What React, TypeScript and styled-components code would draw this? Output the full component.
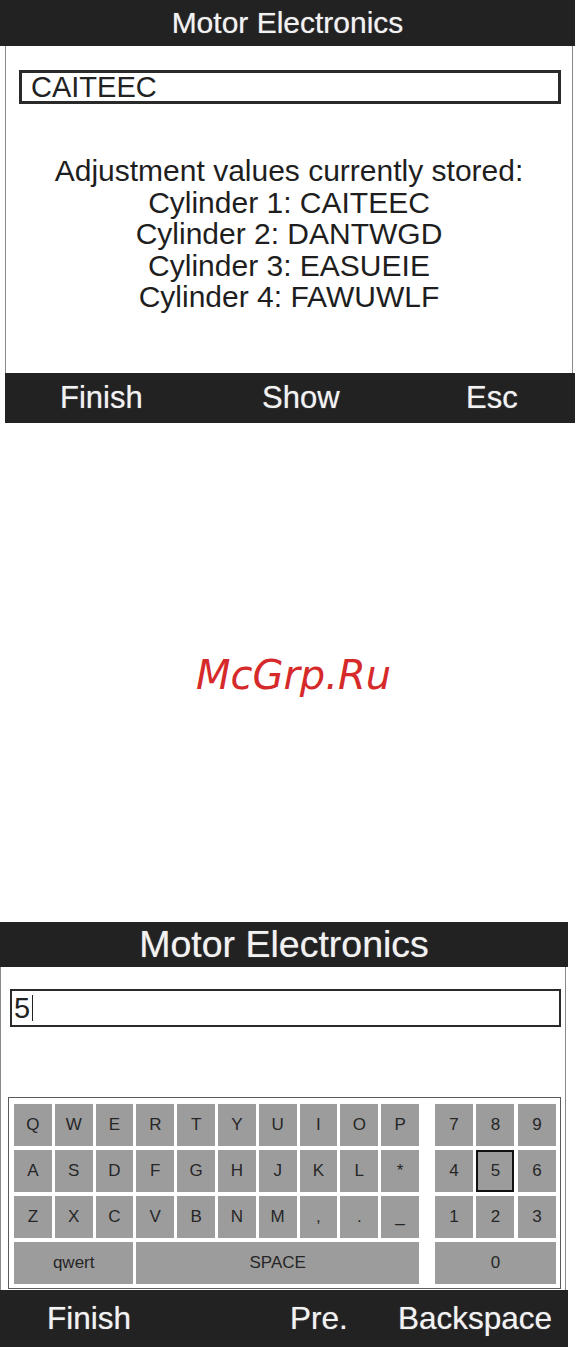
import styled, { createGlobalStyle } from 'styled-components';

const GlobalStyle = createGlobalStyle`
  html, body {
    margin: 0;
    padding: 0;
    background: #ffffff;
  }
  body {
    font-family: 'Liberation Sans', Arial, sans-serif;
  }
`;

const Page = styled.div`
  display: flex;
  flex-direction: column;
  width: 575px;
  height: 1347px;
`;

const Screen = styled.div<{ $width: number }>`
  display: flex;
  flex-direction: column;
  width: ${(p) => p.$width}px;
`;

const TitleBar = styled.div<{ $height: number; $size: number }>`
  height: ${(p) => p.$height}px;
  background: #222222;
  color: #f2f2f2;
  font-size: ${(p) => p.$size}px;
  display: flex;
  align-items: center;
  justify-content: center;
  text-shadow: 0 0 1px #999;
`;

const Body = styled.div<{ $height: number; $left: number; $right: number }>`
  height: ${(p) => p.$height}px;
  margin: 0 ${(p) => p.$right}px 0 ${(p) => p.$left}px;
  border-left: 1px solid #8a8a8a;
  border-right: 1px solid #8a8a8a;
  box-sizing: border-box;
  background: #fff;
  display: flex;
  flex-direction: column;
`;

const InputBox = styled.div<{
  $top: number;
  $left: number;
  $width: number;
  $height: number;
  $border: number;
  $pad: number;
}>`
  margin: ${(p) => p.$top}px 0 0 ${(p) => p.$left}px;
  width: ${(p) => p.$width}px;
  height: ${(p) => p.$height}px;
  box-sizing: border-box;
  border: ${(p) => p.$border}px solid #2a2a2a;
  display: flex;
  align-items: center;
  padding-left: ${(p) => p.$pad}px;
  font-size: 29px;
  color: #222;
`;

const Cursor = styled.span`
  display: inline-block;
  width: 1px;
  height: 26px;
  background: #222;
  margin-left: 2px;
`;

const Message = styled.div`
  margin-top: 51px;
  text-align: center;
  font-size: 30px;
  line-height: 31.6px;
  color: #1e1e1e;
`;

const SoftKeys = styled.div<{ $height: number; $left: number; $pad: number; $size: number; $cols: string }>`
  height: ${(p) => p.$height}px;
  margin-left: ${(p) => p.$left}px;
  padding-left: ${(p) => p.$pad}px;
  background: #222222;
  color: #f2f2f2;
  font-size: ${(p) => p.$size}px;
  display: grid;
  grid-template-columns: ${(p) => p.$cols};
  align-items: center;
  text-shadow: 0 0 1px #999;
`;

const SoftKey = styled.div`
  white-space: nowrap;
`;

const Spacer = styled.div`
  flex: 1;
  display: flex;
  align-items: center;
  justify-content: center;
`;

const Watermark = styled.div`
  font-family: 'DejaVu Sans', sans-serif;
  font-style: italic;
  font-size: 40px;
  color: #d62a2a;
  margin-left: 12px;
  margin-top: 4px;
`;

const KeyboardBox = styled.div`
  margin: 70px 0 0 7px;
  width: 553px;
  box-sizing: border-box;
  border: 1px solid #5a5a5a;
  padding: 6px 2px 4px 5px;
  display: flex;
  gap: 16px;
`;

const KeyGrid = styled.div<{ $cols: number; $colWidth: number; $gap: number }>`
  display: grid;
  grid-template-columns: repeat(${(p) => p.$cols}, ${(p) => p.$colWidth}px);
  grid-auto-rows: 42px;
  column-gap: ${(p) => p.$gap}px;
  row-gap: 4px;
`;

const Key = styled.div<{ $span?: number; $selected?: boolean }>`
  grid-column: span ${(p) => p.$span || 1};
  background: #9c9c9c;
  color: #262626;
  font-size: 17px;
  display: flex;
  align-items: center;
  justify-content: center;
  box-sizing: border-box;
  border: ${(p) => (p.$selected ? '2px solid #111' : 'none')};
`;

const letterRows = [
  ['Q', 'W', 'E', 'R', 'T', 'Y', 'U', 'I', 'O', 'P'],
  ['A', 'S', 'D', 'F', 'G', 'H', 'J', 'K', 'L', '*'],
  ['Z', 'X', 'C', 'V', 'B', 'N', 'M', ',', '.', '_'],
];

const numberKeys = ['7', '8', '9', '4', '5', '6', '1', '2', '3'];

const storedValues = [
  'Adjustment values currently stored:',
  'Cylinder 1: CAITEEC',
  'Cylinder 2: DANTWGD',
  'Cylinder 3: EASUEIE',
  'Cylinder 4: FAWUWLF',
];

const App = (): JSX.Element => {
  return (
    <Page>
      <GlobalStyle />
      <Screen $width={575}>
        <TitleBar $height={46} $size={30}>
          Motor Electronics
        </TitleBar>
        <Body $height={327} $left={5} $right={2}>
          <InputBox $top={24} $left={13} $width={542} $height={34} $border={3} $pad={9}>
            CAITEEC
          </InputBox>
          <Message>
            {storedValues.map((line) => (
              <div key={line}>{line}</div>
            ))}
          </Message>
        </Body>
        <SoftKeys $height={50} $left={5} $pad={55} $size={31} $cols="202px 204px 1fr">
          <SoftKey>Finish</SoftKey>
          <SoftKey>Show</SoftKey>
          <SoftKey>Esc</SoftKey>
        </SoftKeys>
      </Screen>

      <Spacer>
        <Watermark>McGrp.Ru</Watermark>
      </Spacer>

      <Screen $width={568}>
        <TitleBar $height={45} $size={37.5}>
          Motor Electronics
        </TitleBar>
        <Body $height={323} $left={0} $right={2}>
          <InputBox $top={22} $left={9} $width={551} $height={38} $border={2} $pad={2}>
            5<Cursor />
          </InputBox>
          <KeyboardBox>
            <KeyGrid $cols={10} $colWidth={37.8} $gap={3}>
              {letterRows.flat().map((k, i) => (
                <Key key={i}>{k}</Key>
              ))}
              <Key $span={3}>qwert</Key>
              <Key $span={7}>SPACE</Key>
            </KeyGrid>
            <KeyGrid $cols={3} $colWidth={38} $gap={3.5}>
              {numberKeys.map((k) => (
                <Key key={k} $selected={k === '5'}>
                  {k}
                </Key>
              ))}
              <Key $span={3}>0</Key>
            </KeyGrid>
          </KeyboardBox>
        </Body>
        <SoftKeys $height={57} $left={0} $pad={47} $size={31.5} $cols="243px 108px 1fr">
          <SoftKey>Finish</SoftKey>
          <SoftKey>Pre.</SoftKey>
          <SoftKey>Backspace</SoftKey>
        </SoftKeys>
      </Screen>
    </Page>
  );
};

export default App;
